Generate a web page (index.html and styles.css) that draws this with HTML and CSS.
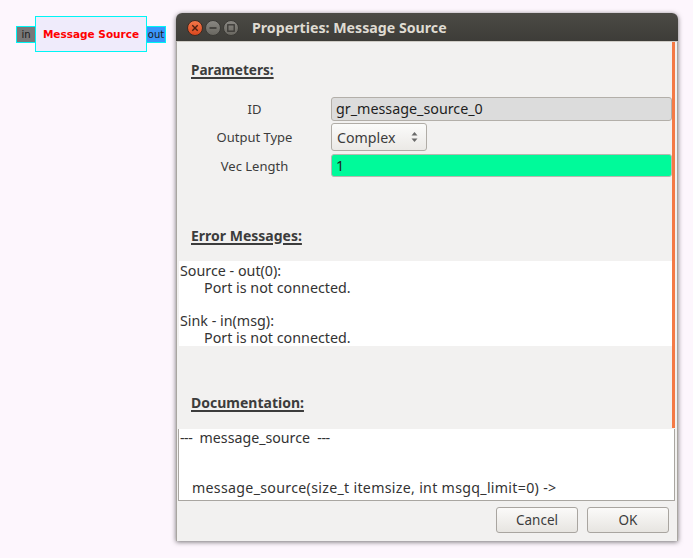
FILE: index.html
```html
<!DOCTYPE html>
<html>
<head>
<meta charset="utf-8">
<title>Properties: Message Source</title>
<link rel="stylesheet" href="styles.css">
</head>
<body>
<div class="desktop">
  <div class="node">
    <span class="port port-in">in</span>
    <div class="block">Message Source</div>
    <span class="port port-out">out</span>
  </div>

  <div class="window">
    <div class="titlebar">
      <svg class="wbtns" width="56" height="18" viewBox="0 0 56 18">
        <defs>
          <linearGradient id="gc" x1="0" y1="0" x2="0" y2="1">
            <stop offset="0" stop-color="#f4784a"/>
            <stop offset="1" stop-color="#d9461d"/>
          </linearGradient>
          <linearGradient id="gg" x1="0" y1="0" x2="0" y2="1">
            <stop offset="0" stop-color="#8a8883"/>
            <stop offset="1" stop-color="#68665f"/>
          </linearGradient>
        </defs>
        <circle cx="9" cy="9" r="7.5" fill="url(#gc)" stroke="#3a2a22" stroke-width="1"/>
        <path d="M6.3 6.3 L11.7 11.7 M11.7 6.3 L6.3 11.7" stroke="#4a1f10" stroke-width="1.4"/>
        <circle cx="27" cy="9" r="7.5" fill="url(#gg)" stroke="#3a3935" stroke-width="1"/>
        <path d="M23.5 9 H30.5" stroke="#3a3935" stroke-width="1.6"/>
        <circle cx="45" cy="9" r="7.5" fill="url(#gg)" stroke="#3a3935" stroke-width="1"/>
        <rect x="41.8" y="5.8" width="6.4" height="6.4" fill="none" stroke="#3a3935" stroke-width="1.3"/>
      </svg>
      <div class="title">Properties: Message Source</div>
    </div>
    <div class="body">
      <div class="scroll">
        <div class="heading heading-params"><span>Parameters:</span></div>
        <div class="params">
          <div class="label">ID</div>
          <div class="entry entry-ro">gr_message_source_0</div>
          <div class="label">Output Type</div>
          <div class="combo-cell">
            <div class="combo">
              <span>Complex</span>
              <svg class="arrows" width="7" height="12" viewBox="0 0 7 12">
                <path d="M0.5 4.5 L3.5 1 L6.5 4.5 Z" fill="#6a6a6a"/>
                <path d="M0.5 7.5 L3.5 11 L6.5 7.5 Z" fill="#6a6a6a"/>
              </svg>
            </div>
          </div>
          <div class="label">Vec Length</div>
          <div class="entry entry-ok">1</div>
        </div>
        <div class="heading heading-err"><span>Error Messages:</span></div>
        <div class="errors">
          <div class="line">Source - out(0):</div>
          <div class="line indent">Port is not connected.</div>
          <div class="line">&nbsp;</div>
          <div class="line">Sink - in(msg):</div>
          <div class="line indent">Port is not connected.</div>
        </div>
        <div class="heading heading-doc"><span>Documentation:</span></div>
      </div>
      <div class="doc">
        <div class="line"><span class="dash">---</span>&nbsp; message_source &nbsp;<span class="dash">---</span></div>
        <div class="line">&nbsp;</div>
        <div class="line">&nbsp;</div>
        <div class="line doc-sig">message_source(size_t itemsize, int msgq_limit=0) -&gt;</div>
      </div>
      <div class="buttons">
        <button class="btn">Cancel</button>
        <button class="btn">OK</button>
      </div>
    </div>
  </div>
</div>
</body>
</html>
```

FILE: styles.css
```css
html, body {
  margin: 0;
  padding: 0;
}
body {
  background: #fdf6fd;
  font-family: "Noto Sans", "Open Sans", sans-serif;
  width: 693px;
  height: 558px;
  overflow: hidden;
}
.desktop {
  position: relative;
  width: 693px;
  height: 558px;
}

/* canvas block */
.node {
  position: absolute;
  left: 16px;
  top: 16px;
  display: flex;
  align-items: center;
}
.port {
  height: 15px;
  line-height: 15px;
  font-family: "DejaVu Sans", sans-serif;
  font-size: 10px;
  color: #1a1a1a;
  border: 1px solid #00f5f5;
  box-sizing: content-box;
}
.port-in {
  width: 18px;
  text-align: center;
  background: #787878;
  border-right: none;
}
.port-out {
  width: 18px;
  text-align: center;
  background: #3a96fb;
  border-left: none;
}
.block {
  width: 110px;
  height: 34px;
  line-height: 34px;
  border: 1px solid #00f5f5;
  background: #efebfb;
  color: #ff0000;
  font-family: "DejaVu Sans", sans-serif;
  font-weight: bold;
  font-size: 10.5px;
  text-align: center;
}

/* window */
.window {
  position: absolute;
  left: 176px;
  top: 13px;
  width: 502px;
  height: 528px;
  display: flex;
  flex-direction: column;
  border-radius: 6px 6px 0 0;
  box-shadow: 0 1px 5px rgba(0, 0, 0, 0.55);
}
.titlebar {
  height: 28px;
  flex: none;
  display: flex;
  align-items: center;
  border-radius: 6px 6px 0 0;
  background: linear-gradient(#4b4a45, #3d3c38);
  padding-left: 10px;
}
.wbtns {
  display: block;
  margin-top: 1px;
}
.title {
  margin-left: 10px;
  color: #dfdbd2;
  font-family: "Noto Sans", sans-serif;
  font-weight: bold;
  font-size: 14.2px;
}
.body {
  flex: 1;
  display: flex;
  flex-direction: column;
  background: #f2f1f0;
  border-top: 1px solid #cfccc6;
  border-left: 1px solid #a9a6a1;
  border-right: 1px solid #a9a6a1;
  color: #3c3c3c;
  font-size: 13px;
}
.scroll {
  height: 386px;
  flex: none;
  margin-left: 1px;
  margin-right: 2px;
  border-right: 3px solid #f47a46;
  display: flex;
  flex-direction: column;
}
.heading {
  height: 18px;
  line-height: 18px;
  padding-left: 13px;
  font-weight: bold;
  font-size: 14px;
  color: #3c3c3c;
}
.heading span {
  text-decoration: underline;
  text-decoration-thickness: 2px;
  text-underline-offset: 2px;
}
.heading-params { margin-top: 19px; font-size: 13.6px; }
.heading-err { margin-top: 50px; }
.heading-doc { margin-top: 48px; }

.params {
  margin-top: 18px;
  display: grid;
  grid-template-columns: 153px 1fr;
  grid-template-rows: 24px 28px 24px;
  row-gap: 2px;
}
.params > :nth-child(5),
.params > :nth-child(6) {
  margin-top: 1px;
}
.label {
  display: flex;
  align-items: center;
  justify-content: center;
  color: #3c3c3c;
}
.entry {
  box-sizing: border-box;
  border: 1px solid #b3afa9;
  border-radius: 3px;
  padding-left: 4px;
  line-height: 22px;
  font-size: 14.3px;
  color: #1e1e1e;
}
.entry-ro {
  background: #dcdcdc;
}
.entry-ok {
  background: #00fa9a;
  border-color: #b8b8b0;
}
.combo-cell {
  display: flex;
}
.combo {
  box-sizing: border-box;
  width: 96px;
  height: 28px;
  border: 1px solid #b0aca6;
  border-radius: 3px;
  background: linear-gradient(#fbfbfa, #ebe9e6);
  display: flex;
  align-items: center;
  padding-left: 5px;
  font-size: 14.2px;
  color: #3c3c3c;
}
.combo .arrows {
  margin-left: auto;
  margin-right: 8px;
}

.errors {
  margin-top: 16px;
  margin-left: 1px;
  height: 85px;
  box-sizing: border-box;
  padding-top: 2px;
  padding-left: 1px;
  background: #ffffff;
  font-size: 14.3px;
}
.line {
  height: 16.66px;
  line-height: 16.66px;
  white-space: nowrap;
  color: #333;
}
.indent {
  padding-left: 24px;
}

.doc {
  margin-top: 1px;
  margin-left: 1px;
  margin-right: 2px;
  height: 70px;
  flex: none;
  background: #ffffff;
  border-left: 1px solid #a9a6a1;
  border-right: 1px solid #a9a6a1;
  border-bottom: 1px solid #a9a6a1;
  padding-top: 1px;
  box-sizing: content-box;
  font-size: 14.2px;
}
.doc .line {
  padding-left: 1px;
}
.dash {
  letter-spacing: -0.5px;
}
.doc-sig {
  padding-left: 13px !important;
  letter-spacing: 0.3px;
}

.buttons {
  flex: 1;
  display: flex;
  justify-content: flex-end;
  align-items: flex-start;
  gap: 9px;
  padding-top: 6px;
  padding-right: 8px;
}
.btn {
  width: 82px;
  height: 26px;
  border: 1px solid #a9a5a0;
  border-radius: 3px;
  background: linear-gradient(#fbfaf9, #e7e5e1);
  font-family: "Noto Sans", sans-serif;
  font-size: 13.5px;
  color: #3c3c3c;
  padding: 0;
}
```
